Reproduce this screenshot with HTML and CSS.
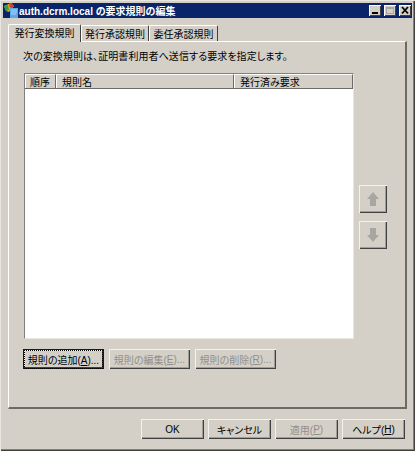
FILE: index.html
```html
<!DOCTYPE html>
<html lang="ja">
<head>
  <meta charset="UTF-8" />
  <title>auth.dcrm.local の要求規則の編集</title>
  <link rel="stylesheet" href="styles.css">
</head>
<body>
  <div class="window">
    <div class="titlebar">
      <svg class="app-icon" width="16" height="15" viewBox="0 0 16 15">
        <path d="M1 3 L8 0 L11 3 L6 9 L3 8 Z" fill="#e8a020"/>
        <path d="M1 3 L5 2 L6 7 L3 8 Z" fill="#30a040"/>
        <path d="M8 0 L11 3 L8 6 L6 2 Z" fill="#d04030"/>
        <rect x="7" y="5" width="8" height="10" fill="#5aa8e8"/>
        <path d="M8 7 H14 M8 9 H14 M8 11 H13" stroke="#a8d8f8" stroke-width="1"/>
      </svg>
      <span class="title"><span class="title-latin">auth.dcrm.local</span> の要求規則の編集</span>
      <div class="caption-buttons">
        <div class="caption-btn">
          <svg width="12" height="11" viewBox="0 0 12 11"><rect x="3" y="7" width="6" height="2" fill="#000"/></svg>
        </div>
        <div class="caption-btn">
          <svg width="12" height="11" viewBox="0 0 12 11"><rect x="2.5" y="2.5" width="7" height="6" fill="none" stroke="#a8a6a0"/><rect x="2" y="2" width="8" height="2" fill="#a8a6a0"/></svg>
        </div>
        <div class="caption-btn">
          <svg width="12" height="11" viewBox="0 0 12 11"><path d="M3 2 L9 8.5 M9 2 L3 8.5" stroke="#000" stroke-width="1.8"/></svg>
        </div>
      </div>
    </div>

    <div class="sheet">
      <div class="tabs">
        <div class="tab active">発行変換規則</div>
        <div class="tab tab-second">発行承認規則</div>
        <div class="tab tab-third">委任承認規則</div>
      </div>

      <div class="panel">
        <p class="intro">次の変換規則は、証明書利用者へ送信する要求を指定します。</p>

        <div class="list-row">
          <div class="list">
            <div class="list-head">
              <div class="col col-order">順序</div>
              <div class="col col-name">規則名</div>
              <div class="col col-claim">発行済み要求</div>
            </div>
          </div>
          <div class="move-buttons">
            <div class="btn move-btn">
              <svg width="12" height="14" viewBox="0 0 12 14"><path d="M6 0 L12 7 H9 V14 H3 V7 H0 Z" fill="#a8a6a0"/></svg>
            </div>
            <div class="btn move-btn">
              <svg width="12" height="14" viewBox="0 0 12 14"><path d="M6 14 L12 7 H9 V0 H3 V7 H0 Z" fill="#a8a6a0"/></svg>
            </div>
          </div>
        </div>

        <div class="rule-buttons">
          <div class="btn rule-btn default"><span class="focus">規則の追加(<u>A</u>)...</span></div>
          <div class="btn rule-btn disabled">規則の編集(<u>E</u>)...</div>
          <div class="btn rule-btn disabled">規則の削除(<u>R</u>)...</div>
        </div>
      </div>

      <div class="footer">
        <div class="btn foot-btn">OK</div>
        <div class="btn foot-btn">キャンセル</div>
        <div class="btn foot-btn disabled">適用(<u>P</u>)</div>
        <div class="btn foot-btn">ヘルプ(<u>H</u>)</div>
      </div>
    </div>
  </div>
</body>
</html>
```

FILE: styles.css
```css
* {
  margin: 0;
  padding: 0;
  box-sizing: border-box;
}

body {
  width: 415px;
  height: 451px;
  overflow: hidden;
  background: #d4d0c8;
  font-family: "Liberation Sans", "Noto Sans CJK JP", sans-serif;
  font-size: 10px;
  font-feature-settings: "palt";
  color: #000;
}

.window {
  width: 415px;
  height: 451px;
  padding: 3px 3px 2px;
  display: flex;
  flex-direction: column;
  background: #d4d0c8;
  box-shadow: inset 1px 1px 0 #e8e6e0, inset -1px -1px 0 #404040, inset -2px -2px 0 #808080;
}

.titlebar {
  height: 15px;
  display: flex;
  align-items: center;
  background: #0a246a;
  color: #fff;
  font-weight: bold;
  font-size: 10px;
  flex-shrink: 0;
}

.app-icon {
  flex-shrink: 0;
}

.title {
  white-space: nowrap;
}

.title-latin {
  font-size: 10px;
}

.caption-buttons {
  margin-left: auto;
  margin-right: 1px;
  display: flex;
  gap: 3px;
}

.caption-btn {
  width: 12px;
  height: 11px;
  background: #d4d0c8;
  box-shadow: inset 1px 1px 0 #fff, inset -1px -1px 0 #404040;
  display: flex;
}

.sheet {
  flex: 1;
  display: flex;
  flex-direction: column;
  padding: 5px 5px 0;
}

.tabs {
  display: flex;
  height: 18px;
  align-items: flex-end;
  position: relative;
  z-index: 1;
}

.tab {
  height: 16px;
  text-align: center;
  white-space: nowrap;
  background: #d4d0c8;
  border-top: 1px solid #fff;
  border-left: 1px solid #fff;
  border-right: 1px solid #404040;
  border-radius: 2px 2px 0 0;
}

.tab.active {
  width: 73px;
  height: 18px;
  margin-bottom: -1px;
}

.tab-second {
  width: 68px;
}

.tab-third {
  width: 69px;
}

.panel {
  height: 368px;
  padding: 8px 0 0 15px;
  border-top: 1px solid #fff;
  border-left: 1px solid #fff;
  border-right: 2px solid #6c6a66;
  border-bottom: 2px solid #6c6a66;
}

.intro {
  height: 23px;
  line-height: 14px;
  margin-left: -1px;
  letter-spacing: 0.07px;
}

.list-row {
  display: flex;
  align-items: flex-start;
  gap: 5px;
}

.list {
  width: 330px;
  height: 266px;
  background: #fff;
  border-top: 1px solid #808080;
  border-left: 1px solid #808080;
  border-right: 1px solid #e8e6e0;
  border-bottom: 1px solid #e8e6e0;
}

.list-head {
  display: flex;
  height: 15px;
  background: #d4d0c8;
  border-bottom: 1px solid #6c6a66;
}

.col {
  height: 14px;
  line-height: 15px;
  padding-left: 5px;
  border-top: 1px solid #fff;
  border-left: 1px solid #fff;
  border-right: 1px solid #6c6a66;
}

.col-order {
  width: 31px;
  padding-left: 4px;
}

.col-name {
  width: 178px;
}

.col-claim {
  flex: 1;
}

.move-buttons {
  display: flex;
  flex-direction: column;
  gap: 8px;
  margin-top: 112px;
}

.btn {
  display: flex;
  align-items: center;
  justify-content: center;
  background: #d4d0c8;
  white-space: nowrap;
  box-shadow: inset 1px 1px 0 #f4f2ee, inset -1px -1px 0 #404040, inset -2px -2px 0 #a09e98;
}

.move-btn {
  width: 28px;
  height: 28px;
}

.rule-buttons {
  display: flex;
  gap: 5px;
  margin-top: 10px;
  margin-left: -1px;
}

.rule-btn {
  width: 81px;
  height: 20px;
}

.default {
  box-shadow: inset 0 0 0 1px #1a1a1a, inset -2px -2px 0 #404040, inset 2px 2px 0 #f4f2ee;
}

.focus {
  padding: 1px 3px;
  outline: 1px dotted #000;
  outline-offset: 0;
}

.disabled {
  color: #918f89;
}

.footer {
  flex: 1;
  display: flex;
  justify-content: flex-end;
  align-items: flex-start;
  gap: 4px;
  padding-top: 10px;
  padding-right: 2px;
}

.foot-btn {
  width: 63px;
  height: 20px;
}
```
